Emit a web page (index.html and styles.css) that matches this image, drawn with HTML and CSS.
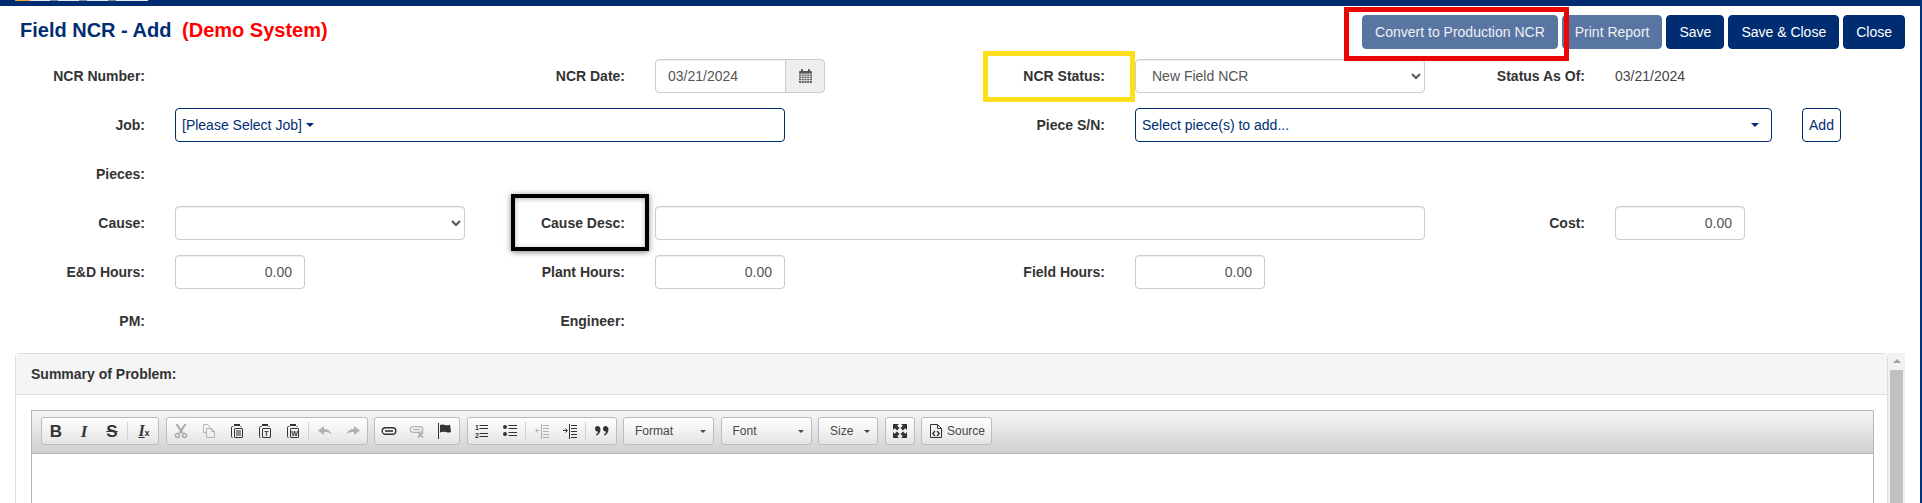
FILE: index.html
```html
<!DOCTYPE html>
<html lang="en">
<head>
<meta charset="utf-8">
<title>Field NCR - Add</title>
<link rel="stylesheet" href="styles.css">
</head>
<body>
<div class="app">
  <div class="topbar"><div class="logo-strip"></div></div>
  <header class="head">
    <h1 class="title">Field NCR - Add <span class="demo">(Demo System)</span></h1>
    <div class="actions">
      <button class="btn btn-muted">Convert to Production NCR</button>
      <button class="btn btn-muted">Print Report</button>
      <button class="btn">Save</button>
      <button class="btn">Save &amp; Close</button>
      <button class="btn">Close</button>
    </div>
  </header>

  <form class="form">
    <div class="row">
      <label class="label">NCR Number:</label>
      <label class="label c4">NCR Date:</label>
      <div class="cell s2">
        <div class="date">
          <input class="input date-input" value="03/21/2024">
          <span class="addon">
            <svg width="13" height="14" viewBox="0 0 13 14"><path fill="#555" d="M0 3.2C0 2.4.5 2 1.2 2H2V1c0-.6.4-1 1-1s1 .4 1 1v1h5V1c0-.6.4-1 1-1s1 .4 1 1v1h.8c.7 0 1.2.4 1.2 1.2V13c0 .6-.5 1-1 1H1c-.5 0-1-.4-1-1z"/><path stroke="#eee" stroke-width=".8" d="M0 5h13M0 7.2h13M0 9.4h13M0 11.6h13M2.6 5v9M5.2 5v9M7.8 5v9M10.4 5v9"/></svg>
          </span>
        </div>
      </div>
      <label class="label c7">NCR Status:</label>
      <div class="cell s2"><select class="input"><option>New Field NCR</option></select></div>
      <label class="label c10">Status As Of:</label>
      <div class="cell s2 value">03/21/2024</div>
    </div>

    <div class="row">
      <label class="label">Job:</label>
      <div class="cell s4"><div class="picker"><span>[Please Select Job]</span><i class="caret"></i></div></div>
      <label class="label c7">Piece S/N:</label>
      <div class="cell s5 piece">
        <div class="picker picker-fill"><span>Select piece(s) to add...</span><i class="caret"></i></div>
        <button type="button" class="btn-add">Add</button>
      </div>
    </div>

    <div class="row"><label class="label">Pieces:</label></div>

    <div class="row">
      <label class="label">Cause:</label>
      <div class="cell s2"><select class="input"><option></option></select></div>
      <label class="label">Cause Desc:</label>
      <div class="cell s5"><input class="input"></div>
      <label class="label">Cost:</label>
      <div class="cell"><input class="input num" value="0.00"></div>
    </div>

    <div class="row">
      <label class="label">E&amp;D Hours:</label>
      <div class="cell"><input class="input num" value="0.00"></div>
      <label class="label c4">Plant Hours:</label>
      <div class="cell"><input class="input num" value="0.00"></div>
      <label class="label c7">Field Hours:</label>
      <div class="cell"><input class="input num" value="0.00"></div>
    </div>

    <div class="row">
      <label class="label">PM:</label>
      <label class="label c4">Engineer:</label>
    </div>
  </form>

  <section class="panel-wrap">
    <div class="panel">
      <div class="panel-head">Summary of Problem:</div>
      <div class="panel-body">
        <div class="editor">
          <div class="toolbar">
            <div class="group">
              <span class="tb"><b class="g-b">B</b></span>
              <span class="tb"><b class="g-i">I</b></span>
              <span class="tb"><b class="g-s">S</b></span>
              <i class="sep"></i>
              <span class="tb"><span class="g-tx"><b>I</b><small>x</small></span></span>
            </div>
            <div class="group">
              <span class="tb"><svg width="16" height="16" viewBox="0 0 16 16" fill="none" stroke="#a8a8a8"><path stroke-width="2" d="M3.5 1l6 9M12.5 1l-6 9"/><circle cx="4.5" cy="12.5" r="2" stroke-width="1.4"/><circle cx="11.5" cy="12.5" r="2" stroke-width="1.4"/></svg></span>
              <span class="tb"><svg width="16" height="16" viewBox="0 0 16 16" fill="none" stroke="#b4b4b4"><path d="M5.5 9.5h-3v-8h4l2 2v2M5.5 5.5h5l3 3v6h-8zM10.5 5.5v3h3"/></svg></span>
              <span class="tb"><svg width="16" height="16" viewBox="0 0 16 16" fill="none" stroke="#333"><path d="M4.5 3.5h-1c-1 0-1 .5-1 1v9c0 1 .5 1 1 1M11.5 3.5h1"/><path stroke-width="2" d="M5 2h6"/><rect x="5.5" y="5.5" width="8" height="9" rx=".5"/><path d="M7 8h5M7 10h5M7 12h5"/></svg></span>
              <span class="tb"><svg width="16" height="16" viewBox="0 0 16 16" fill="none" stroke="#333"><path d="M4.5 3.5h-1c-1 0-1 .5-1 1v9c0 1 .5 1 1 1M11.5 3.5h1"/><path stroke-width="2" d="M5 2h6"/><rect x="5.5" y="5.5" width="8" height="9" rx=".5"/><text x="9.5" y="13" class="svg-mini" fill="#333" stroke="none" text-anchor="middle">T</text></svg></span>
              <span class="tb"><svg width="16" height="16" viewBox="0 0 16 16" fill="none" stroke="#333"><path d="M4.5 3.5h-1c-1 0-1 .5-1 1v9c0 1 .5 1 1 1M11.5 3.5h1"/><path stroke-width="2" d="M5 2h6"/><rect x="5.5" y="5.5" width="8" height="9" rx=".5"/><text x="9.5" y="13" class="svg-mini" fill="#333" stroke="none" text-anchor="middle">W</text></svg></span>
              <i class="sep"></i>
              <span class="tb"><svg width="16" height="16" viewBox="0 0 16 16"><path fill="#b0b0b0" d="M1 7.5L7 3v3c4 0 6.500 2 7.500 5.500C12.500 9.500 10.500 9 7 9v3z"/></svg></span>
              <span class="tb"><svg width="16" height="16" viewBox="0 0 16 16"><path fill="#b0b0b0" d="M15 7.500L9 3v3C5 6 2.500 8 1.500 11.500 3.500 9.500 5.500 9 9 9v3z"/></svg></span>
            </div>
            <div class="group">
              <span class="tb"><svg width="16" height="16" viewBox="0 0 16 16" fill="none" stroke="#333" stroke-width="1.400"><rect x="1.200" y="4.700" width="13.600" height="6.600" rx="3.300"/><path d="M4 8h8" stroke-width="1.600"/></svg></span>
              <span class="tb"><svg width="16" height="16" viewBox="0 0 16 16" fill="none" stroke="#b4b4b4" stroke-width="1.300"><rect x="1.200" y="3.700" width="12.600" height="5.600" rx="2.800"/><path d="M4 6.500h7"/><path stroke="#a8a8a8" stroke-width="1.500" d="M9 9.500l5 5M14 9.500l-5 5"/></svg></span>
              <span class="tb"><svg width="16" height="16" viewBox="0 0 16 16"><path stroke="#333" stroke-width="1" d="M1.500 0v16"/><path fill="#333" d="M3 2c2-1 3-.5 5 0s3 .5 5-.5L14 9c-2 1-3 .5-5 0s-4-.5-6 .5z"/></svg></span>
            </div>
            <div class="group">
              <span class="tb"><svg width="16" height="16" viewBox="0 0 16 16"><text x="1" y="7" class="svg-mini" fill="#333">1</text><text x="1" y="14.500" class="svg-mini" fill="#333">2</text><path stroke="#333" stroke-width="1.200" d="M5.500 2.500H14M5.500 5.500H14M5.500 10.500H14M5.500 13.500H14"/></svg></span>
              <span class="tb"><svg width="16" height="16" viewBox="0 0 16 16"><circle cx="3" cy="4" r="2" fill="#333"/><circle cx="3" cy="11" r="2" fill="#333"/><path stroke="#333" stroke-width="1.200" d="M6.500 2.500H15M6.500 5.500H15M6.500 9.500H15M6.500 12.500H15"/></svg></span>
              <i class="sep"></i>
              <span class="tb"><svg width="16" height="16" viewBox="0 0 16 16" fill="none" stroke="#b0b0b0"><path d="M9 2.500h6M9 5.500h6M9 8.500h6M9 11.500h6M9 14.500h6M7.500 1v15"/><path d="M5.500 7.500H1.500M3.500 5.500l-2 2 2 2"/></svg></span>
              <span class="tb"><svg width="16" height="16" viewBox="0 0 16 16" fill="none" stroke="#333"><path d="M9 2.500h6M9 5.500h6M9 8.500h6M9 11.500h6M9 14.500h6M7.500 1v15"/><path d="M1 7.500h4M3.500 5.500l2 2-2 2"/></svg></span>
              <i class="sep"></i>
              <span class="tb"><svg width="16" height="16" viewBox="0 0 16 16"><path fill="#333" d="M3.500 3C5.200 3 6.500 4.300 6.500 6.500c0 3-1.800 5.200-4 6l-.6-.9C3 11 4 10 4.200 8.800 2.600 8.700 1 7.700 1 5.800 1 4.200 2 3 3.500 3zM11.500 3c1.700 0 3 1.300 3 3.500 0 3-1.800 5.200-4 6l-.6-.9c1.100-.6 2.100-1.600 2.300-2.800C10.600 8.700 9 7.700 9 5.800 9 4.200 10 3 11.500 3z"/></svg></span>
            </div>
            <div class="group combo c-format"><span>Format</span><i class="combo-arrow"></i></div>
            <div class="group combo c-font"><span>Font</span><i class="combo-arrow"></i></div>
            <div class="group combo c-size"><span>Size</span><i class="combo-arrow"></i></div>
            <div class="group">
              <span class="tb"><svg width="16" height="16" viewBox="0 0 16 16"><path fill="#333" d="M1 1h6L5.200 2.800 7.500 5 5 7.500 2.800 5.200 1 7zM15 1v6l-1.800-1.800L11 7.500 8.500 5l2.300-2.200L9 1zM1 15V9l1.800 1.800L5 8.500 7.500 11l-2.300 2.200L7 15zM15 15H9l1.800-1.800L8.500 11 11 8.500l2.200 2.300L15 9z"/></svg></span>
            </div>
            <div class="group source">
              <svg width="16" height="16" viewBox="0 0 16 16" fill="none" stroke="#333"><path d="M2.500 1.500h7l4 4v9h-11zM9.500 1.500v4h4"/><path stroke-width="1.300" d="M7 8l-2.200 2.500L7 13M9 8l2.200 2.500L9 13"/></svg>
              <span>Source</span>
            </div>
          </div>
          <div class="editor-content"></div>
        </div>
      </div>
    </div>
    <div class="scrollbar"><i class="scroll-up"></i><div class="scroll-thumb"></div></div>
  </section>

  <div class="mark mark-red"></div>
  <div class="mark mark-yellow"></div>
  <div class="mark mark-black"></div>
</div>
</body>
</html>
```

FILE: styles.css
```css
* { box-sizing: border-box; }
html, body { margin: 0; padding: 0; background: #fff; }
body { font-family: "Liberation Sans", Arial, sans-serif; font-size: 14px; color: #333; }

.app {
  position: relative;
  width: 1922px;
  height: 503px;
  overflow: hidden;
  background: #fff;
  border-right: 2px solid #00337a;
}

.topbar { position: relative; height: 6px; background: #002d72; }
.logo-strip {
  position: absolute;
  left: 15px;
  top: 0;
  width: 133px;
  height: 1px;
  background: linear-gradient(90deg, #f2a53a 0 11%, #e8e8ee 11% 26%, #7f8fb5 26% 32%, #e8e8ee 32% 48%, #7f8fb5 48% 54%, #e8e8ee 54% 70%, #7f8fb5 70% 76%, #e8e8ee 76% 100%);
}

.head {
  display: flex;
  justify-content: space-between;
  align-items: flex-start;
  padding: 9px 15px 10px 20px;
  height: 53px;
}
.title { margin: 1px 0 0; font-size: 20px; line-height: 28px; font-weight: 700; color: #002d72; white-space: pre-wrap; }
.demo { margin-left: 5px; color: #f00; }
.actions { display: flex; gap: 4px; }
.btn {
  height: 34px;
  padding: 0 12px;
  border: 1px solid #002d72;
  border-radius: 4px;
  background: #002d72;
  color: #fff;
  font: 14px "Liberation Sans", Arial, sans-serif;
}
.btn-muted { background: #5976a3; border-color: #5976a3; color: #eef1f6; }

.row {
  display: grid;
  grid-template-columns: repeat(12, 160px);
  width: 1920px;
  height: 34px;
  margin-bottom: 15px;
}
.label {
  padding: 0 15px;
  line-height: 34px;
  text-align: right;
  font-weight: 700;
  color: #333;
  white-space: nowrap;
}
.cell { padding: 0 15px; min-width: 0; }
.c4 { grid-column-start: 4; }
.c7 { grid-column-start: 7; }
.c10 { grid-column-start: 10; }
.s2 { grid-column-end: span 2; }
.s4 { grid-column-end: span 4; }
.s5 { grid-column-end: span 5; }

.input {
  display: block;
  width: 100%;
  height: 34px;
  padding: 6px 12px;
  border: 1px solid #ccc;
  border-radius: 4px;
  background: #fff;
  color: #555;
  font: 14px "Liberation Sans", Arial, sans-serif;
  box-shadow: inset 0 1px 1px rgba(0, 0, 0, .075);
}
.num { text-align: right; }
.value { line-height: 34px; color: #444; }

.date { display: flex; width: 170px; }
.date-input { flex: 1; width: 130px; border-radius: 4px 0 0 4px; }
.addon {
  display: flex;
  align-items: center;
  justify-content: center;
  width: 40px;
  height: 34px;
  margin-left: -1px;
  background: #eee;
  border: 1px solid #ccc;
  border-radius: 0 4px 4px 0;
}

.picker {
  display: flex;
  align-items: center;
  gap: 4px;
  height: 34px;
  padding: 0 6px;
  border: 1px solid #002d72;
  border-radius: 4px;
  background: #fff;
  color: #002d72;
}
.caret {
  width: 0;
  height: 0;
  border-top: 4px solid #002d72;
  border-left: 4px solid transparent;
  border-right: 4px solid transparent;
}
.piece { display: flex; gap: 30px; }
.picker-fill { flex: 0 0 637px; justify-content: space-between; padding-right: 12px; }
.btn-add {
  width: 39px;
  height: 34px;
  padding: 0;
  border: 1px solid #002d72;
  border-radius: 4px;
  background: #fff;
  color: #002d72;
  font: 14px "Liberation Sans", Arial, sans-serif;
}

.panel-wrap { display: flex; align-items: flex-start; padding: 0 15px; height: 150px; }
.panel {
  flex: 1;
  height: 200px;
  border: 1px solid #ddd;
  border-radius: 4px;
  background: #fff;
}
.panel-head {
  height: 41px;
  padding: 0 15px;
  line-height: 40px;
  font-weight: 700;
  background: #f5f5f5;
  border-bottom: 1px solid #ddd;
}
.panel-body { padding: 15px 13px 0 15px; }

.editor { border: 1px solid #b6b6b6; height: 150px; }
.toolbar {
  display: flex;
  gap: 6.5px;
  height: 43px;
  padding: 6px 0 0 9px;
  background: linear-gradient(#f5f5f5, #cfd1cf);
  border-bottom: 1px solid #b6b6b6;
}
.editor-content { background: #fff; }

.group {
  display: flex;
  align-items: center;
  height: 28px;
  padding: 0;
  border: 1px solid #bcbcbc;
  border-radius: 3px;
  background: linear-gradient(#fff, #e4e4e4);
}
.tb {
  display: flex;
  align-items: center;
  justify-content: center;
  flex: 0 0 28px;
  width: 28px;
  height: 26px;
}
.sep { flex: 0 0 1px; height: 18px; margin: 0 2px 0 1px; background: #d0d0d0; }

.g-b { font: 700 17px/1 "Liberation Sans", Arial, sans-serif; color: #333; }
.g-i { font: italic 700 17px/1 "Liberation Serif", serif; color: #333; }
.g-s { font: 700 17px/1 "Liberation Sans", Arial, sans-serif; color: #333; text-decoration: line-through; }
.g-tx { color: #333; }
.g-tx b { font: italic 700 16px/1 "Liberation Serif", serif; text-decoration: underline; }
.g-tx small { font: 700 9px/1 "Liberation Sans", Arial, sans-serif; }
.svg-mini { font: 700 7px "Liberation Sans", Arial, sans-serif; }

.combo { justify-content: space-between; padding: 0 7px 0 11px; font-size: 12px; color: #484848; }
.c-format { width: 91px; }
.c-font { width: 91px; }
.c-size { width: 60px; }
.combo-arrow {
  width: 0;
  height: 0;
  border-top: 3px solid #484848;
  border-left: 3px solid transparent;
  border-right: 3px solid transparent;
}
.source { gap: 3px; padding: 0 6px; font-size: 12px; color: #484848; }

.scrollbar { flex: 0 0 17px; height: 150px; background: #f1f1f1; position: relative; }
.scroll-up {
  display: block;
  width: 0;
  height: 0;
  margin: 6px auto 0;
  border-bottom: 4px solid #a3a3a3;
  border-left: 4px solid transparent;
  border-right: 4px solid transparent;
}
.scroll-thumb { width: 13px; height: 140px; margin: 7px auto 0; background: #c1c1c1; }

.mark { position: absolute; }
.mark-red { left: 1344px; top: 7px; width: 225px; height: 54px; border: 5px solid #e90808; }
.mark-yellow { left: 983px; top: 51px; width: 152px; height: 51px; border: 5px solid #fcdf1a; }
.mark-black {
  left: 511px;
  top: 194px;
  width: 138px;
  height: 57px;
  border: 4px solid #000;
  box-shadow: 0 1px 6px rgba(0, 0, 0, .5), inset 0 1px 5px rgba(0, 0, 0, .3);
}
```
